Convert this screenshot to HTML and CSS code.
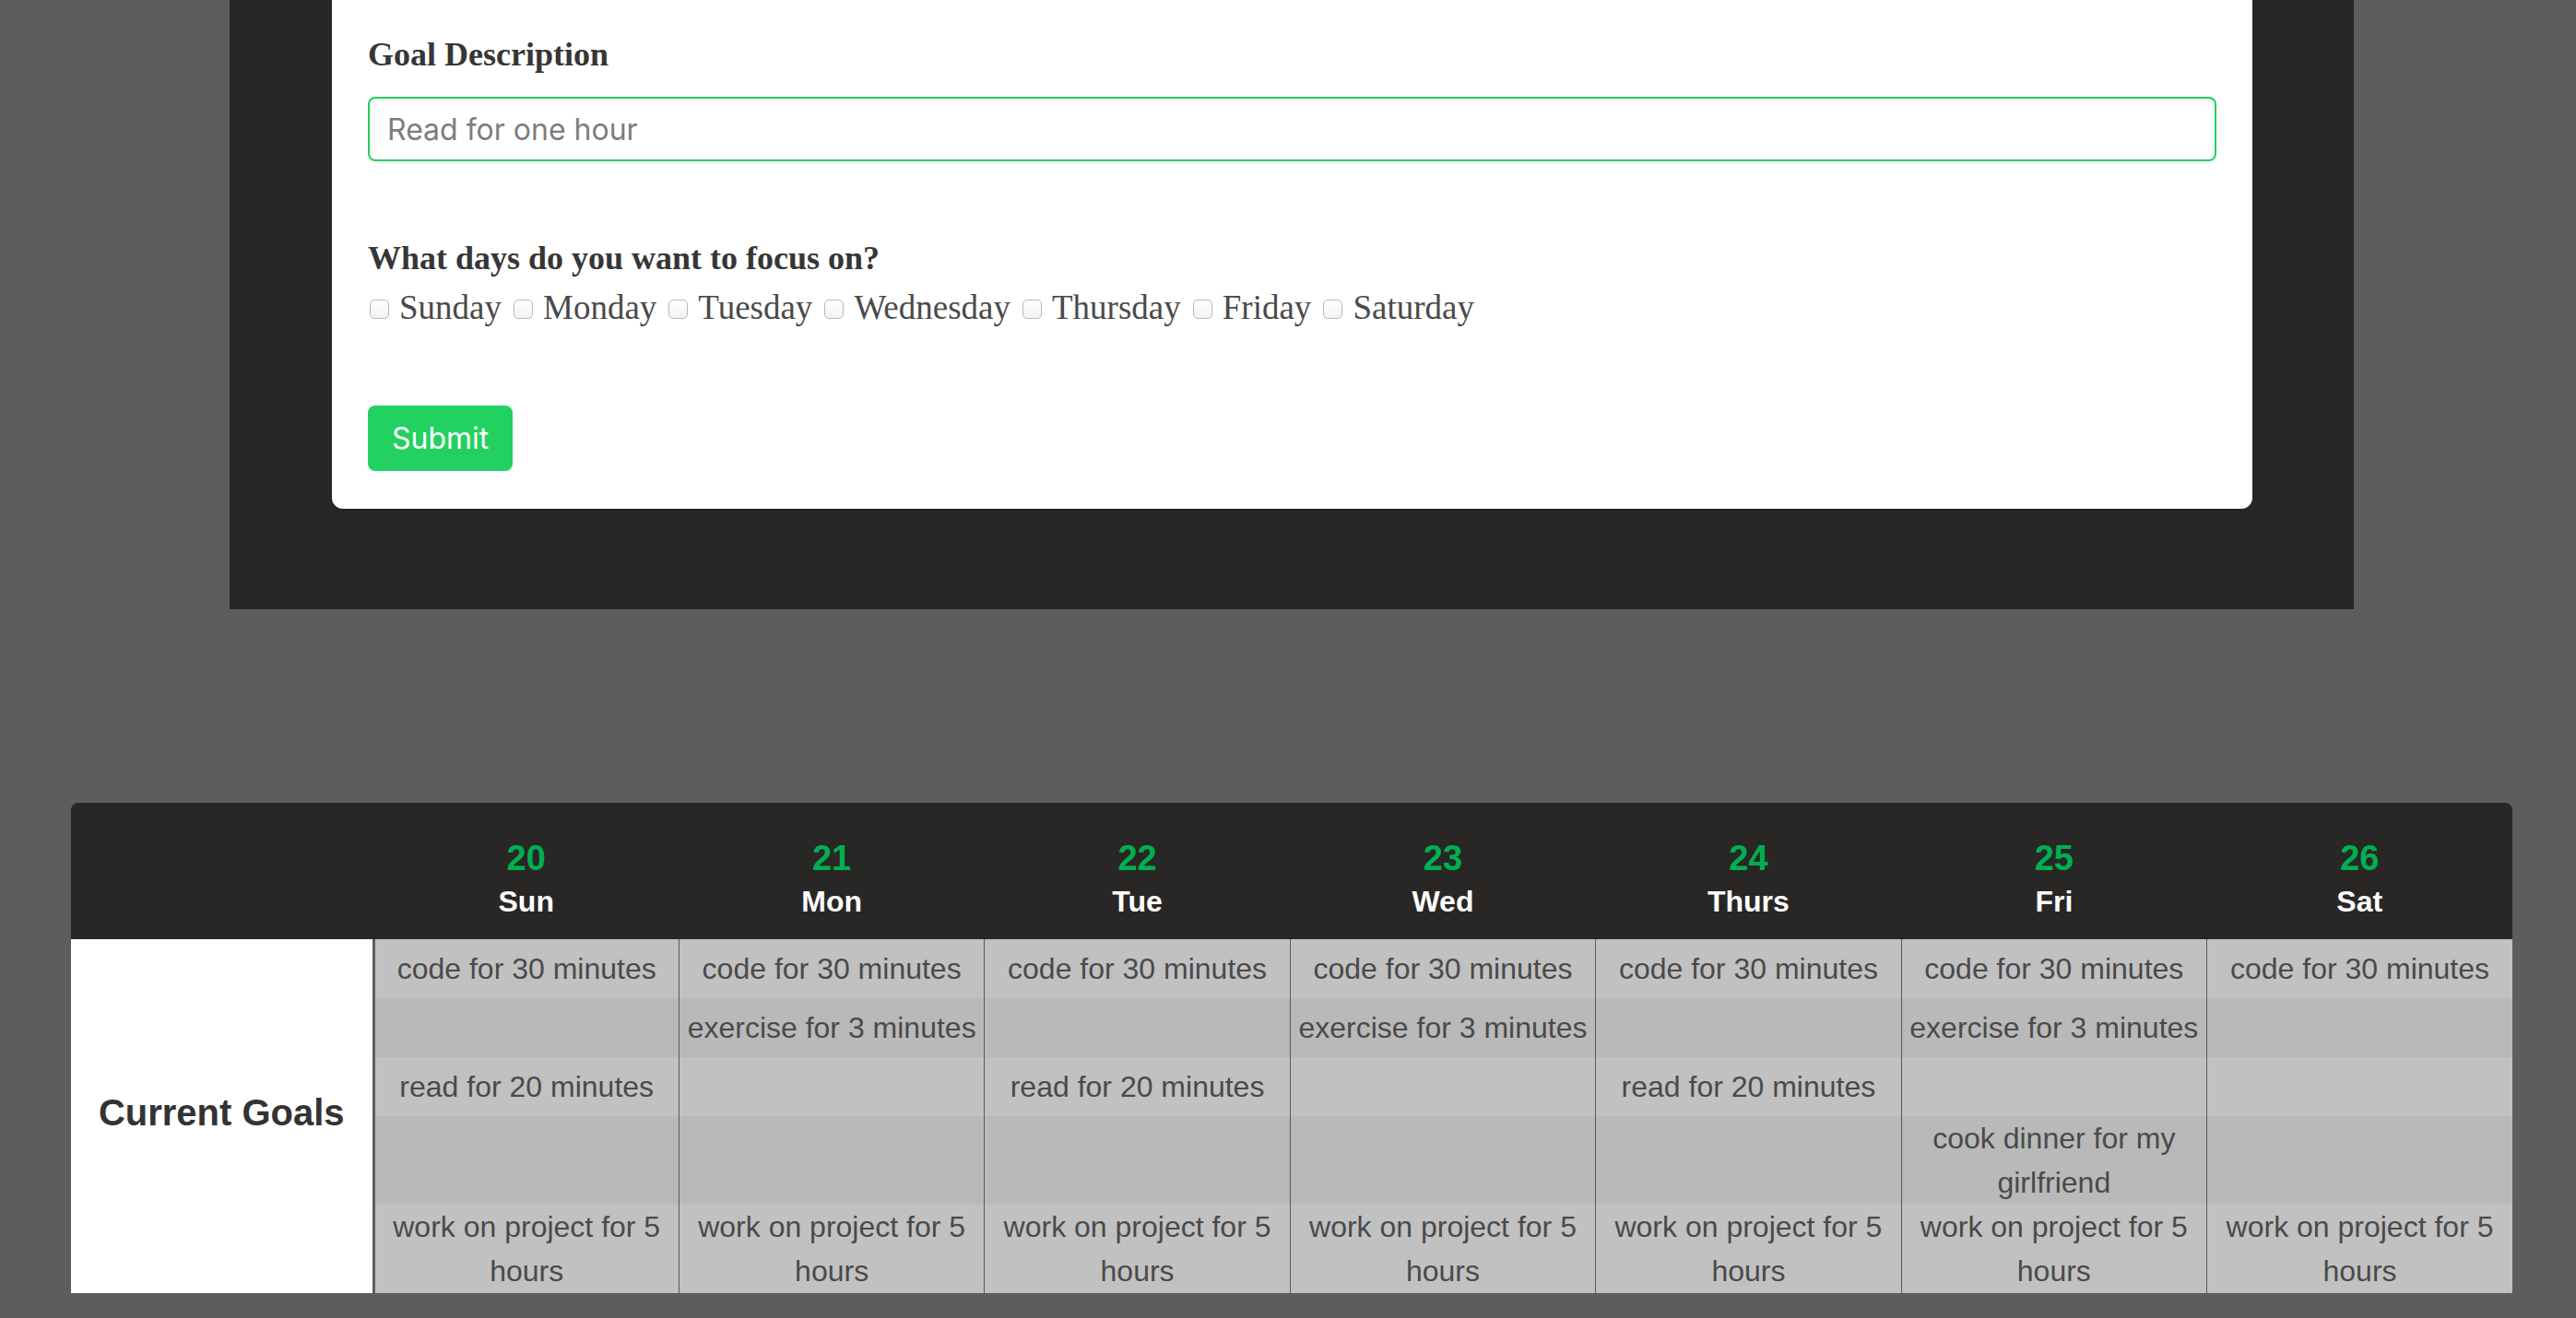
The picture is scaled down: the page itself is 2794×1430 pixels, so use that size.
FILE: index.html
```html
<!DOCTYPE html>
<html lang="en">
<head>
<meta charset="utf-8">
<title>Goals</title>
<link rel="stylesheet" href="styles.css">
</head>
<body>
<section class="frame">
  <form class="card">
    <label class="label" for="goal">Goal Description</label>
    <input class="input" id="goal" type="text" placeholder="Read for one hour">
    <div class="label days-title">What days do you want to focus on?</div>
    <div class="days">
      <label class="day"><input type="checkbox" class="check">Sunday</label>
      <label class="day"><input type="checkbox" class="check">Monday</label>
      <label class="day"><input type="checkbox" class="check">Tuesday</label>
      <label class="day"><input type="checkbox" class="check">Wednesday</label>
      <label class="day"><input type="checkbox" class="check">Thursday</label>
      <label class="day"><input type="checkbox" class="check">Friday</label>
      <label class="day"><input type="checkbox" class="check">Saturday</label>
    </div>
    <button type="button" class="submit">Submit</button>
  </form>
</section>

<div class="calendar">
  <table class="goals">
    <colgroup>
      <col class="col-label">
      <col><col><col><col><col><col><col>
    </colgroup>
    <thead>
      <tr>
        <th class="corner"></th>
        <th class="first"><span class="num">20</span><span class="dname">Sun</span></th>
        <th><span class="num">21</span><span class="dname">Mon</span></th>
        <th><span class="num">22</span><span class="dname">Tue</span></th>
        <th><span class="num">23</span><span class="dname">Wed</span></th>
        <th><span class="num">24</span><span class="dname">Thurs</span></th>
        <th><span class="num">25</span><span class="dname">Fri</span></th>
        <th><span class="num">26</span><span class="dname">Sat</span></th>
      </tr>
    </thead>
    <tbody>
      <tr class="light">
        <td class="goals-label" rowspan="5">Current Goals</td>
        <td class="first">code for 30 minutes</td>
        <td>code for 30 minutes</td>
        <td>code for 30 minutes</td>
        <td>code for 30 minutes</td>
        <td>code for 30 minutes</td>
        <td>code for 30 minutes</td>
        <td>code for 30 minutes</td>
      </tr>
      <tr class="dark">
        <td class="first"></td>
        <td>exercise for 3 minutes</td>
        <td></td>
        <td>exercise for 3 minutes</td>
        <td></td>
        <td>exercise for 3 minutes</td>
        <td></td>
      </tr>
      <tr class="light">
        <td class="first">read for 20 minutes</td>
        <td></td>
        <td>read for 20 minutes</td>
        <td></td>
        <td>read for 20 minutes</td>
        <td></td>
        <td></td>
      </tr>
      <tr class="dark">
        <td class="first"></td>
        <td></td>
        <td></td>
        <td></td>
        <td></td>
        <td>cook dinner for my girlfriend</td>
        <td></td>
      </tr>
      <tr class="light">
        <td class="first">work on project for 5 hours</td>
        <td>work on project for 5 hours</td>
        <td>work on project for 5 hours</td>
        <td>work on project for 5 hours</td>
        <td>work on project for 5 hours</td>
        <td>work on project for 5 hours</td>
        <td>work on project for 5 hours</td>
      </tr>
    </tbody>
  </table>
</div>
</body>
</html>
```

FILE: styles.css
```css
html, body {
  margin: 0;
  padding: 0;
}
body {
  background: #5d5d5d;
  font-family: "Liberation Sans", Arial, sans-serif;
  height: 1430px;
  overflow: hidden;
}

.frame {
  margin-left: 249px;
  width: 2304px;
  box-sizing: border-box;
  background: #282726;
  padding: 0 110px 109px 111px;
}

.card {
  display: flex;
  flex-direction: column;
  align-items: flex-start;
  background: #ffffff;
  border-radius: 0 0 12px 12px;
  padding: 32px 39px 41px 39px;
  box-shadow: 0 2px 3px rgba(10, 10, 10, 0.1);
}

.label {
  font-family: "Liberation Serif", "Times New Roman", serif;
  font-weight: 700;
  font-size: 36px;
  line-height: 54px;
  color: #363636;
}

.input {
  margin-top: 19px;
  align-self: stretch;
  box-sizing: border-box;
  height: 70px;
  border: 2px solid #23d160;
  border-radius: 8px;
  padding: 0 19px;
  font-family: Inter, "Noto Sans", sans-serif;
  font-size: 32px;
  color: #363636;
  background: #fff;
  box-shadow: inset 0 2px 4px rgba(10, 10, 10, 0.08);
  outline: none;
}
.input::placeholder {
  color: #7d7d7d;
}

.days-title {
  margin-top: 78px;
}

.days {
  display: flex;
  align-items: center;
  gap: 11px;
  height: 54px;
}

.day {
  display: flex;
  align-items: center;
  font-family: "Liberation Serif", "Times New Roman", serif;
  font-size: 37px;
  line-height: 54px;
  color: #4a4a4a;
}

.check {
  appearance: none;
  -webkit-appearance: none;
  width: 21px;
  height: 21px;
  margin: 2px 11px 0 2px;
  border: 1px solid #b8b8b8;
  border-radius: 5px;
  background: linear-gradient(#ffffff, #f2f2f2);
  box-sizing: border-box;
}

.submit {
  margin-top: 79px;
  height: 71px;
  padding: 0 26px;
  border: none;
  border-radius: 8px;
  background: #23d160;
  color: #ffffff;
  font-family: Inter, "Noto Sans", sans-serif;
  font-size: 32px;
}

.calendar {
  margin: 210px 0 0 77px;
  width: 2648px;
  border-radius: 8px 8px 0 0;
  overflow: hidden;
}

.goals {
  width: 100%;
  table-layout: fixed;
  border-collapse: collapse;
  border-spacing: 0;
}

.col-label {
  width: 328px;
}

.goals th {
  background: #282726;
  padding: 37px 0 17px;
  text-align: center;
  vertical-align: top;
}

.num {
  display: block;
  color: #00b050;
  font-size: 38px;
  line-height: 46px;
  font-weight: 700;
}

.dname {
  display: block;
  color: #ffffff;
  font-size: 32px;
  line-height: 48px;
  font-weight: 700;
}

.goals td {
  height: 64px;
  padding: 0 4px;
  font-size: 32px;
  line-height: 48px;
  color: #4a4a4a;
  text-align: center;
  vertical-align: middle;
  border-left: 1px solid #5a5a5a;
  box-sizing: border-box;
}

.light td {
  background: #c1c1c1;
}
.dark td {
  background: #b9b9b9;
}

.goals td.first {
  border-left: 3px solid #5d5d5d;
}

.goals td.goals-label {
  background: #ffffff;
  border-left: none;
  color: #333333;
  font-size: 40px;
  font-weight: 700;
  padding-bottom: 8px;
}
```
